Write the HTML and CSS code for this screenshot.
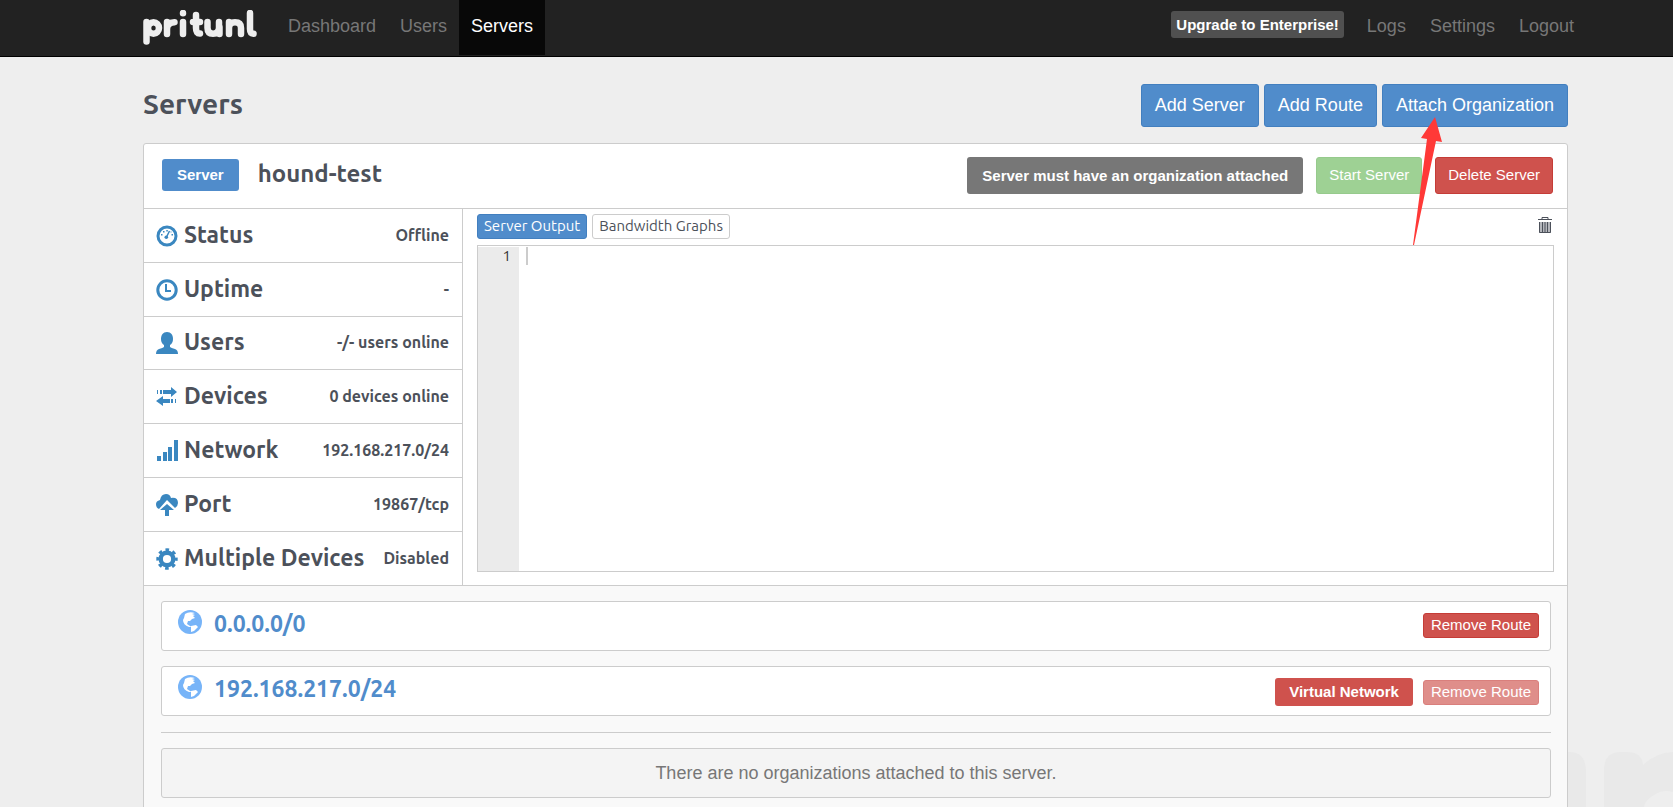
FILE: index.html
```html
<!DOCTYPE html>
<html lang="en">
<head>
<meta charset="utf-8">
<title>Pritunl - Servers</title>
<link rel="stylesheet" href="styles.css">
</head>
<body>
<header class="navbar">
  <nav class="container nav-inner">
    <a class="brand" href="#" aria-label="pritunl">
      <svg class="brand-logo" viewBox="0 0 114 36" aria-hidden="true">
        <g fill="none" stroke="#eee" stroke-width="6.500" stroke-linecap="round" stroke-linejoin="round">
          <path d="M3.500 12V31.500"/><ellipse cx="10.500" cy="18" rx="5.500" ry="5.800"/>
          <path d="M24 24V12M24 19Q24 12.500 31.500 12.200"/>
          <path d="M40 12V24M40 3V3.200"/>
          <path d="M53 5V18Q53 23.700 57 23.500M50 12H57"/>
          <path d="M64.500 12V18Q64.500 23.700 70 23.700T76 18V12M76.500 17V24"/>
          <path d="M86 24V12M86 18Q86 12.300 92 12.300T98 18V24"/>
          <path d="M107 3V19Q107 23.500 110.500 23.700"/>
        </g>
      </svg>
    </a>
    <a class="nav-link" href="#">Dashboard</a>
    <a class="nav-link" href="#">Users</a>
    <a class="nav-link active" href="#">Servers</a>
    <span class="spacer"></span>
    <a class="upgrade" href="#">Upgrade to Enterprise!</a>
    <a class="nav-link" href="#">Logs</a>
    <a class="nav-link" href="#">Settings</a>
    <a class="nav-link" href="#">Logout</a>
  </nav>
</header>
<svg class="watermark" viewBox="0 0 130 62" aria-hidden="true">
  <path fill="#e9e9e9" d="M0 7H25Q43 6 43 27V62H0ZM61 62V25Q61 7 78 7H84Q99 7 100 20Q112 8 130 7V47Q120 44 111 50Q102 55 101 62Z"/>
</svg>
<main class="container">
  <div class="page-head">
    <h1>Servers</h1>
    <div class="actions">
      <button class="btn primary large" type="button">Add Server</button>
      <button class="btn primary large" type="button">Add Route</button>
      <button class="btn primary large" type="button">Attach Organization
        <svg class="arrow" viewBox="0 0 30 128" aria-hidden="true"><path fill="#ff3937" d="M22 0L29 25L23 24L1 128H0L14 22L8 21Z"/></svg>
      </button>
    </div>
  </div>
  <section class="server">
    <div class="server-head">
      <span class="label blue">Server</span>
      <h2>hound-test</h2>
      <span class="spacer"></span>
      <span class="label gray">Server must have an organization attached</span>
      <button class="btn success" type="button" disabled>Start Server</button>
      <button class="btn danger" type="button">Delete Server</button>
    </div>
    <div class="server-body">
      <ul class="stats">
        <li><svg viewBox="0 0 22 22"><circle cx="11" cy="11" r="9" fill="none" stroke="#3a87c0" stroke-width="3"/><path stroke="#3a87c0" stroke-width="1.500" fill="none" d="M10.500 12L13.500 6"/><circle cx="10.300" cy="12.300" r="1.800" fill="#3a87c0"/><path fill="#3a87c0" d="M5 9h1.500v1.500H5zM7 6h1.500v1.500H7zM10.300 5h1.500v1.500h-1.500zM15.500 9H17v1.500h-1.500zM14.500 6.500h1v1h-1z"/></svg><h3>Status</h3><span>Offline</span></li>
        <li><svg viewBox="0 0 22 22"><circle cx="11" cy="11" r="9.200" fill="none" stroke="#3a87c0" stroke-width="3"/><path stroke="#3a87c0" stroke-width="2" fill="none" d="M10 5V12H15"/></svg><h3>Uptime</h3><span>-</span></li>
        <li><svg viewBox="0 0 22 22"><path fill="#3a87c0" d="M11 0C15 0 17 3 17 7Q17 11 14 13V15Q15 16 19 17Q22 18 22 22H0Q0 18 3 17Q7 16 8 15V13Q5 11 5 7C5 3 7 0 11 0Z"/></svg><h3>Users</h3><span>-/- users online</span></li>
        <li><svg viewBox="0 0 22 22"><path fill="#3a87c0" d="M1 4h1v4H1zM4 4h2v4H4zM7 4h8V1l6 5-6 5V8H7zM20 13h-1v4h1zM17 13h-2v4h2zM14 13H7v-3l-7 5 7 5v-3h7z"/></svg><h3>Devices</h3><span>0 devices online</span></li>
        <li><svg viewBox="0 0 22 22"><path fill="#3a87c0" d="M1 16h4v5H1zM7 12h4v9H7zM12 7h4v14h-4zM18 0h4v21h-4z"/></svg><h3>Network</h3><span>192.168.217.0/24</span></li>
        <li><svg viewBox="0 0 22 22"><path fill="#3a87c0" d="M3 15Q0 14 0 10Q0 7 4 6Q5 0 10 0Q14 0 15 4Q22 3 22 9Q22 12 19 14L11 6ZM11 10L18 16H13V22H9V16H4Z"/></svg><h3>Port</h3><span>19867/tcp</span></li>
        <li><svg viewBox="0 0 22 22"><circle cx="11" cy="11" r="6.300" fill="none" stroke="#3a87c0" stroke-width="4.400"/><circle cx="11" cy="11" r="9.200" fill="none" stroke="#3a87c0" stroke-width="3" stroke-dasharray="3.600 3.625" stroke-dashoffset="1.800"/></svg><h3>Multiple Devices</h3><span>Disabled</span></li>
      </ul>
      <div class="output">
        <div class="tabs">
          <button class="tab selected" type="button">Server Output</button>
          <button class="tab" type="button">Bandwidth Graphs</button>
          <span class="spacer"></span>
          <button class="trash" type="button" aria-label="Clear output"><svg viewBox="0 0 14 16"><path fill="#b4b6bb" d="M1 5h12v11H1z"/><path fill="none" stroke="#4c515a" d="M0 2.500H14M4 2V.5H10V2M1.500 5V15.500H12.500V5M4.500 5V15M7 5V15M9.500 5V15"/></svg></button>
        </div>
        <div class="editor"><div class="gutter">1</div><div class="code"><span class="cursor"></span></div></div>
      </div>
    </div>
    <div class="routes">
      <div class="route">
        <svg class="globe" viewBox="0 0 24 24"><circle cx="12" cy="12" r="12" fill="#77b4f8"/><path fill="#fff" d="M7 4Q11 1 17 3L14 4 17 5 15 6 17 8 14 9 12 11 10 11 9 14 12 16 14 17 11 17Q5 15 5 10L6 8ZM13 16L18 15 20 17 16 21 13 22Z"/></svg>
        <h3>0.0.0.0/0</h3><span class="spacer"></span>
        <button class="btn danger small" type="button">Remove Route</button>
      </div>
      <div class="route">
        <svg class="globe" viewBox="0 0 24 24"><circle cx="12" cy="12" r="12" fill="#77b4f8"/><path fill="#fff" d="M7 4Q11 1 17 3L14 4 17 5 15 6 17 8 14 9 12 11 10 11 9 14 12 16 14 17 11 17Q5 15 5 10L6 8ZM13 16L18 15 20 17 16 21 13 22Z"/></svg>
        <h3>192.168.217.0/24</h3><span class="spacer"></span>
        <span class="label red">Virtual Network</span>
        <button class="btn danger small" type="button" disabled>Remove Route</button>
      </div>
      <hr>
      <p class="notice">There are no organizations attached to this server.</p>
    </div>
  </section>
</main>
</body>
</html>
```
FILE: styles.css
```css
* { box-sizing: border-box; }
html { height: 100%; overflow: hidden; }
body { margin: 0; min-height: 100%; background: #eee; color: #4c515a; font: 18px/26px "Liberation Sans", Arial, sans-serif; }
h1, h2, h3, p, ul { margin: 0; padding: 0; }
h1, h2, h3, .stats, .tab { font-family: Ubuntu, "Noto Sans", sans-serif; }
a { text-decoration: none; }
button { font: inherit; margin: 0; }
.container { margin: 0 105px 0 143px; position: relative; }
.spacer { flex: 1; }

.navbar { background: #222; border-bottom: 1px solid #000; height: 57px; }
.nav-inner { display: flex; align-items: flex-start; margin-right: 99px; }
.nav-inner .nav-link { color: #777; line-height: 26px; padding: 13px 12px 16px; }
.nav-inner .active { color: #fff; background: #080808; }
.nav-inner .nav-link:last-child { padding-right: 0; }
.brand { display: block; padding: 10px 19px 0 0; height: 55px; }
.brand-logo { display: block; width: 114px; height: 36px; }
.upgrade { color: #fff; background: #505050; border-radius: 3px; font-weight: bold; font-size: 15px; line-height: 27px; padding: 0 5px; margin: 11px 11px 0 0; }

.watermark { position: absolute; right: 0; bottom: 0; width: 130px; height: 62px; }

.page-head { display: flex; justify-content: space-between; align-items: flex-start; padding: 27px 0 16px; }
h1 { font-size: 28px; line-height: 40px; font-weight: 600; }
.actions { display: flex; gap: 5px; }
.btn { position: relative; border: 1px solid; border-radius: 3px; color: #fff; font-size: 15px; line-height: 22px; padding: 6px 12px 7px; white-space: nowrap; }
.btn:disabled { opacity: .65; }
.primary { background: #508ccb; border-color: #427fbf; }
.success { background: #6bb95c; border-color: #5fae50; }
.danger { background: #cf524d; border-color: #c53c37; }
.large { font-size: 18px; line-height: 25px; padding: 8px 13px; }
.small { line-height: 21px; padding: 0 7px 2px; }
.arrow { position: absolute; left: 30px; top: 32px; width: 30px; height: 128px; z-index: 2; pointer-events: none; }

.server { background: #fff; border: 1px solid #ccc; border-radius: 3px 3px 0 0; }
.server-head { display: flex; align-items: flex-start; gap: 13px; padding: 13px 14px 14px 18px; height: 65px; border-bottom: 1px solid #ccc; }
.label { border-radius: 3px; color: #fff; font-weight: bold; font-size: 15px; line-height: 32px; padding: 0 15px; white-space: nowrap; }
.blue { background: #508ccb; margin-top: 2px; }
.gray { background: #777; line-height: 37px; }
.red { background: #cf524d; line-height: 28px; padding: 0 14px; }
h2 { font-size: 24px; line-height: 34px; font-weight: 600; margin-left: 6px; }

.server-body { display: flex; }
.stats { width: 319px; list-style: none; border-right: 1px solid #ccc; flex: none; }
.stats li { display: flex; align-items: center; height: 54px; padding: 0 13px 0 12px; border-bottom: 1px solid #ccc; }
.stats li:nth-child(3) { height: 53px; }
.stats li:last-child { border: 0; height: 53px; }
.stats svg { width: 22px; height: 22px; margin-right: 6px; }
.stats h3 { flex: 1; font-size: 23px; line-height: 32px; font-weight: 600; white-space: nowrap; margin-bottom: 2px; }
.stats span { font-size: 16px; font-weight: 600; white-space: nowrap; margin-bottom: 2px; }
.output { flex: 1; display: flex; flex-direction: column; padding: 5px 13px 13px 14px; }
.tabs { display: flex; align-items: flex-start; gap: 5px; height: 31px; }
.tab { background: #fff; color: #4c515a; border: 1px solid #ccc; border-radius: 3px; font-size: 15px; line-height: 21px; padding: 0 6px 2px; height: 25px; }
.selected { background: #508ccb; border-color: #427fbf; color: #fff; }
.trash { background: none; border: 0; padding: 3px 2px; width: 18px; height: 22px; }
.trash svg { display: block; width: 14px; height: 16px; }
.editor { flex: 1; display: flex; border: 1px solid #ccc; padding-top: 1px; }
.gutter { width: 41px; background: #ebebeb; color: #333; font: 15px/18px Ubuntu, "Noto Sans", sans-serif; text-align: right; padding-right: 8px; }
.code { padding-left: 7px; }
.cursor { display: block; width: 2px; height: 18px; background: #ccc; }

.routes { background: #f9f9f9; border-top: 1px solid #ccc; padding: 15px 16px 16px 17px; }
.route { display: flex; align-items: flex-start; background: #fff; border: 1px solid #ccc; border-radius: 3px; height: 50px; padding: 0 11px 0 16px; margin-bottom: 15px; }
.globe { width: 24px; height: 24px; margin: 8px 12px 0 0; }
.route h3 { color: #508ccb; font-size: 23px; line-height: 32px; font-weight: 700; margin-top: 6px; }
.route .btn { margin-top: 11px; }
.route .red { margin: 11px 10px 0 0; }
.route .red + .btn { margin-top: 13px; }
hr { border: 0; border-top: 1px solid #ccc; margin: 16px 0 15px; }
.notice { background: #f4f4f4; border: 1px solid #ccc; border-radius: 3px; color: #777; text-align: center; line-height: 26px; padding: 11px 0; }
```
